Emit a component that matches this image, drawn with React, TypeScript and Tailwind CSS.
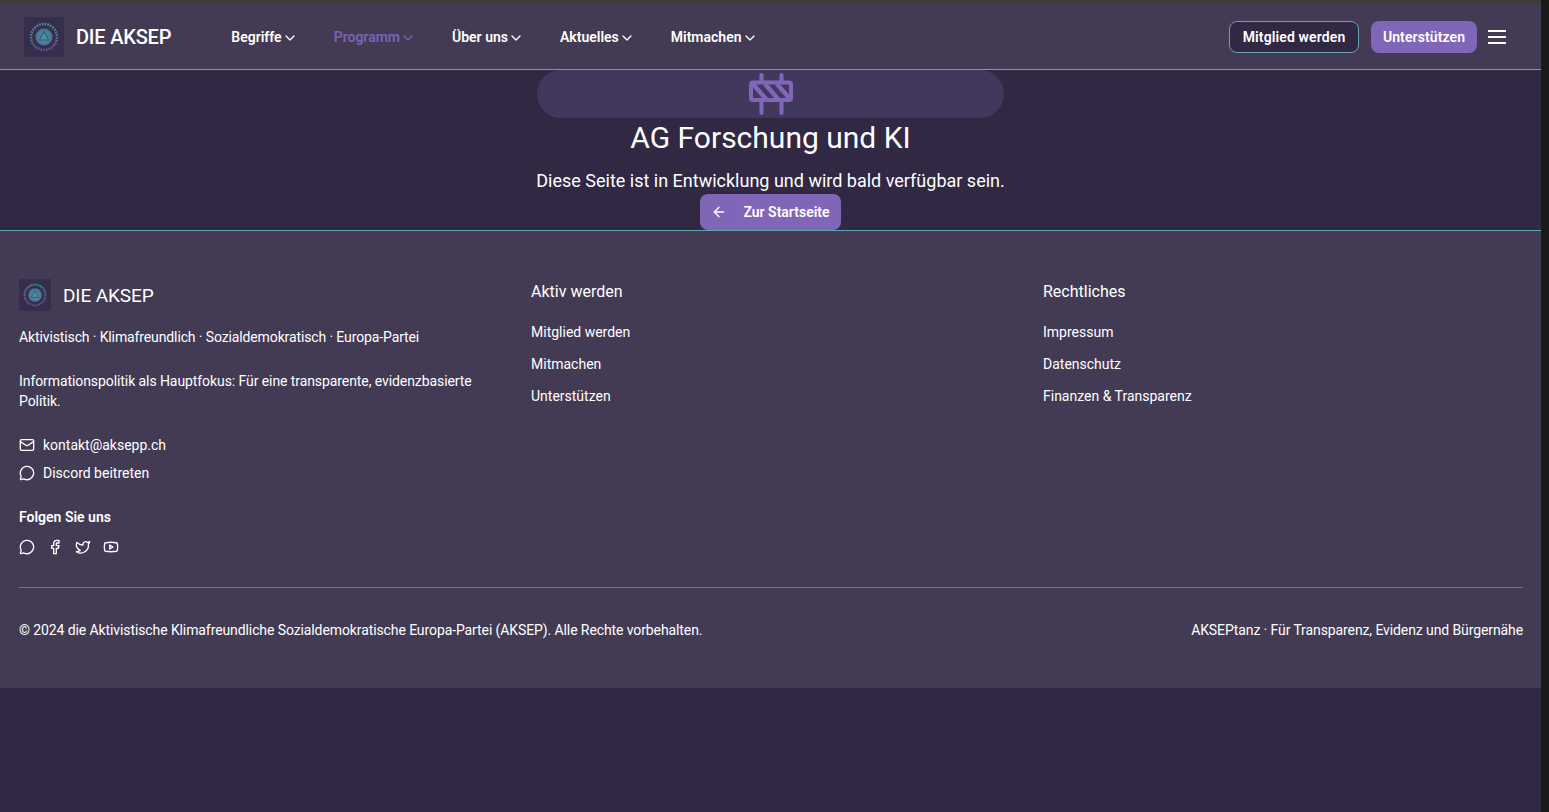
import { ArrowLeft, ChevronDown, Facebook, Mail, MessageCircle, Twitter, Youtube } from "lucide-react";

const navItems = ["Begriffe", "Programm", "Über uns", "Aktuelles", "Mitmachen"];

function Logo({ size }: { size: "lg" | "sm" }) {
  return (
    <span className={size === "lg" ? "block h-10 w-10 shrink-0 bg-[#372e4c]" : "block h-8 w-8 shrink-0 bg-[#372e4c]"}>
      <svg viewBox="0 0 40 40" className="h-full w-full">
        <defs>
          <linearGradient id="logo-ring" x1="0" y1="0" x2="0" y2="1">
            <stop offset="0" stopColor="#3f9c8c" />
            <stop offset="1" stopColor="#5a58a0" />
          </linearGradient>
          <radialGradient id="logo-disc">
            <stop offset="0" stopColor="#4f9a9c" />
            <stop offset="1" stopColor="#4a6fa0" />
          </radialGradient>
        </defs>
        <circle cx="20" cy="20" r="13" fill="none" stroke="url(#logo-ring)" strokeWidth="2.5" strokeDasharray="1.6 1.2" />
        <circle cx="20" cy="20" r="8.5" fill="url(#logo-disc)" />
        <path d="M20 14.5l4.8 8.5h-9.6z" fill="none" stroke="#35607a" strokeWidth="1.2" />
      </svg>
    </span>
  );
}

function FooterLinks({ title, links }: { title: string; links: string[] }) {
  return (
    <div>
      <h3 className="mt-px text-[16px] leading-6">{title}</h3>
      <ul className="mt-[18px] flex flex-col gap-3 text-[14px] leading-5">
        {links.map((link) => (
          <li key={link}>{link}</li>
        ))}
      </ul>
    </div>
  );
}

export default function App() {
  return (
    <div className="flex min-h-[812px] font-['Roboto',sans-serif] text-white">
      <div className="flex min-w-0 flex-1 flex-col bg-[#312844]">
        <div className="h-1 bg-[#3d3d3d]" />
        <header className="flex h-[66px] items-center justify-between border-b border-[#6f9fb5] bg-[#433b53] pl-6 pr-[35px]">
          <div className="flex items-center">
            <div className="flex items-center gap-3">
              <Logo size="lg" />
              <span className="text-[20px] font-medium tracking-[-0.2px]">DIE AKSEP</span>
            </div>
            <nav className="ml-[60px] flex items-center gap-9 pt-0.5 text-[14px] font-semibold">
              {navItems.map((item) => (
                <span key={item} className={item === "Programm" ? "flex items-center text-[#7b62b8]" : "flex items-center"}>
                  {item}
                  <ChevronDown className="h-4 w-4" />
                </span>
              ))}
            </nav>
          </div>
          <div className="flex items-center">
            <button className="h-8 w-[130px] rounded-lg border border-[#6f9fb5] bg-[#312844] pt-0.5 text-[14px] font-semibold tracking-[0.13px]">
              Mitglied werden
            </button>
            <button className="ml-3 h-8 w-[106px] rounded-lg bg-[#8166b8] pt-0.5 text-[14px] font-semibold tracking-[0.1px]">
              Unterstützen
            </button>
            <span className="ml-[11px] flex h-[14px] w-[18px] flex-col justify-between">
              <span className="h-0.5 bg-white" />
              <span className="h-0.5 bg-white" />
              <span className="h-0.5 bg-white" />
            </span>
          </div>
        </header>

        <main className="flex h-[161px] flex-col items-center border-b border-[#5fa5b8]">
          <div className="flex h-12 w-[467px] items-center justify-center rounded-full bg-[#42385e]">
            <svg viewBox="0 0 44 42" className="h-[42px] w-11 text-[#8166b8]" fill="none" stroke="currentColor" strokeWidth="4" strokeLinecap="round" strokeLinejoin="round">
              <rect x="2" y="9.5" width="40" height="17.5" rx="2" />
              <path d="M12.5 2v7" />
              <path d="M32.5 2v7" />
              <path d="M12.5 28v12" />
              <path d="M32.5 28v12" />
              <path d="M4 11l13 15M16 11l13 15M28 11l13 15" strokeWidth="4.5" strokeLinecap="butt" />
            </svg>
          </div>
          <h1 className="mt-[2px] text-[30px] leading-9">AG Forschung und KI</h1>
          <p className="mt-[11px] h-[27px] text-[18px] leading-7">Diese Seite ist in Entwicklung und wird bald verfügbar sein.</p>
          <button className="flex h-9 w-[141px] items-center justify-center gap-4 rounded-lg bg-[#8166b8] text-[14px] font-semibold">
            <ArrowLeft className="h-4 w-4" />
            Zur Startseite
          </button>
        </main>

        <footer className="h-[457px] bg-[#433b53] pl-[19px] pr-[18px] pt-12">
          <div className="grid grid-cols-3 gap-8">
            <div>
              <div className="flex items-center gap-3">
                <Logo size="sm" />
                <span className="h-8 text-[19px] leading-[34px] tracking-[-0.1px]">DIE AKSEP</span>
              </div>
              <p className="mt-4 text-[14px] leading-5 tracking-[-0.12px]">
                Aktivistisch · Klimafreundlich · Sozialdemokratisch · Europa-Partei
              </p>
              <p className="mt-6 text-[14px] leading-5 tracking-[-0.08px]">
                Informationspolitik als Hauptfokus: Für eine transparente, evidenzbasierte Politik.
              </p>
              <div className="mt-6 flex flex-col gap-2 text-[14px] leading-5">
                <div className="flex items-center gap-2">
                  <Mail className="h-4 w-4" />
                  kontakt@aksepp.ch
                </div>
                <div className="flex items-center gap-2">
                  <MessageCircle className="h-4 w-4" />
                  Discord beitreten
                </div>
              </div>
              <h4 className="mt-6 text-[14px] font-semibold leading-5">Folgen Sie uns</h4>
              <div className="mt-3 flex gap-3">
                <MessageCircle className="h-4 w-4" />
                <Facebook className="h-4 w-4" />
                <Twitter className="h-4 w-4" />
                <Youtube className="h-4 w-4" />
              </div>
            </div>
            <FooterLinks title="Aktiv werden" links={["Mitglied werden", "Mitmachen", "Unterstützen"]} />
            <FooterLinks title="Rechtliches" links={["Impressum", "Datenschutz", "Finanzen & Transparenz"]} />
          </div>
          <div className="mt-8 flex items-center justify-between border-t border-[#7b7389] pt-8 text-[14px] leading-5 tracking-[-0.1px]">
            <span>© 2024 die Aktivistische Klimafreundliche Sozialdemokratische Europa-Partei (AKSEP). Alle Rechte vorbehalten.</span>
            <span>AKSEPtanz · Für Transparenz, Evidenz und Bürgernähe</span>
          </div>
        </footer>
      </div>
      <div className="w-2 shrink-0 bg-[#1b1a1a]" />
    </div>
  );
}
